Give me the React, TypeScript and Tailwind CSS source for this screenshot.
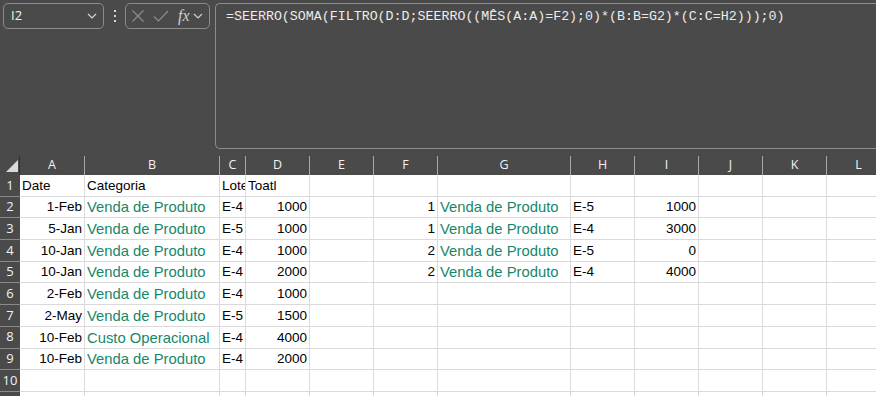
import React from "react";

type Cell = { v: string; align?: "l" | "r"; green?: boolean };

const COLS = ["A", "B", "C", "D", "E", "F", "G", "H", "I", "J", "K", "L"];
const WIDTHS = ["w-[65px]", "w-[135px]", "w-[26px]", "w-[64px]", "w-[64px]", "w-[64px]", "w-[133px]", "w-[64px]", "w-[64px]", "w-[64px]", "w-[64px]", "w-[64px]"];

const FORMULA = "=SEERRO(SOMA(FILTRO(D:D;SEERRO((MÊS(A:A)=F2);0)*(B:B=G2)*(C:C=H2)));0)";

const l = (v: string): Cell => ({ v });
const r = (v: string): Cell => ({ v, align: "r" });
const g = (v: string): Cell => ({ v, green: true });
const e: Cell = { v: "" };

const rows: Cell[][] = [
  [l("Date"), l("Categoria"), l("Lote"), l("Toatl"), e, e, e, e, e, e, e, e],
  [r("1-Feb"), g("Venda de Produto"), l("E-4"), r("1000"), e, r("1"), g("Venda de Produto"), l("E-5"), r("1000"), e, e, e],
  [r("5-Jan"), g("Venda de Produto"), l("E-5"), r("1000"), e, r("1"), g("Venda de Produto"), l("E-4"), r("3000"), e, e, e],
  [r("10-Jan"), g("Venda de Produto"), l("E-4"), r("1000"), e, r("2"), g("Venda de Produto"), l("E-5"), r("0"), e, e, e],
  [r("10-Jan"), g("Venda de Produto"), l("E-4"), r("2000"), e, r("2"), g("Venda de Produto"), l("E-4"), r("4000"), e, e, e],
  [r("2-Feb"), g("Venda de Produto"), l("E-4"), r("1000"), e, e, e, e, e, e, e, e],
  [r("2-May"), g("Venda de Produto"), l("E-5"), r("1500"), e, e, e, e, e, e, e, e],
  [r("10-Feb"), g("Custo Operacional"), l("E-4"), r("4000"), e, e, e, e, e, e, e, e],
  [r("10-Feb"), g("Venda de Produto"), l("E-4"), r("2000"), e, e, e, e, e, e, e, e],
  [e, e, e, e, e, e, e, e, e, e, e, e],
  [e, e, e, e, e, e, e, e, e, e, e, e],
];

const Chevron = ({ className }: { className?: string }) => (
  <svg width="10" height="6" viewBox="0 0 10 6" className={className}>
    <path d="M1 1 L5 5 L9 1" fill="none" stroke="currentColor" strokeWidth="1.2" />
  </svg>
);

const FormulaBar: React.FC = () => (
  <div className="flex h-[156px] pt-[3px] pl-[3px]">
    <div className="flex h-[26px] w-[101px] items-center justify-between rounded-[5px] border border-[#8c8c8c] pl-[7px] pr-[6px] text-[13px] text-[#f2f2f2] font-['Open_Sans',sans-serif]">
      <span>I2</span>
      <Chevron className="text-[#d6d6d6]" />
    </div>
    <div className="flex h-[26px] w-[21px] flex-col items-center justify-center gap-[3px]">
      <span className="h-[2px] w-[2px] bg-[#d6d6d6]" />
      <span className="h-[2px] w-[2px] bg-[#d6d6d6]" />
      <span className="h-[2px] w-[2px] bg-[#d6d6d6]" />
    </div>
    <div className="flex h-[26px] w-[85px] items-center rounded-[5px] border border-[#8c8c8c] pl-[5px] pr-[2px]">
      <svg width="14" height="14" viewBox="0 0 14 14" className="text-[#8e8e8e]">
        <path d="M1.5 1.5 L12.5 12.5 M12.5 1.5 L1.5 12.5" stroke="currentColor" strokeWidth="1.1" fill="none" />
      </svg>
      <svg width="16" height="14" viewBox="0 0 16 14" className="ml-[8px] text-[#8e8e8e]">
        <path d="M1 7.5 L5.5 12 L15 2" stroke="currentColor" strokeWidth="1.1" fill="none" />
      </svg>
      <span className="ml-[9px] text-[16px] italic leading-none text-[#cfcfcf] font-['Liberation_Serif',serif]">fx</span>
      <Chevron className="ml-[3px] text-[#cfcfcf]" />
    </div>
    <div className="ml-[5px] h-[146px] flex-1 rounded-l-[5px] border border-r-0 border-[#8c8c8c] pl-[10px] pt-[4px]">
      <div className="text-[13.3px] leading-[18px] text-[#ececec] font-['Liberation_Mono',monospace] whitespace-nowrap">
        {FORMULA}
      </div>
    </div>
  </div>
);

const App: React.FC = () => {
  return (
    <div className="h-[396px] w-[876px] overflow-hidden bg-[#4a4a4a]">
      <FormulaBar />
      <div className="flex h-[19px] text-[12.5px] text-[#f2f2f2] font-['Open_Sans',sans-serif]">
        <div className="relative w-[20px] shrink-0 border-r border-[#2f2f2f]">
          <svg width="12" height="12" viewBox="0 0 12 12" className="absolute left-[6px] top-[4px]">
            <path d="M12 0 L12 12 L0 12 Z" fill="#d9d9d9" />
          </svg>
        </div>
        {COLS.map((c, i) => (
          <div key={c} className={`${WIDTHS[i]} shrink-0 flex items-center justify-center border-r border-[#a8a8a8]`}>
            {c}
          </div>
        ))}
      </div>
      {rows.map((row, ri) => (
        <div key={ri} className="flex h-[21.7px]">
          <div className="flex w-[20px] shrink-0 items-center justify-center border-b border-[#8a8a8a] bg-[#4a4a4a] text-[13px] text-[#f2f2f2] font-['Open_Sans',sans-serif]">
            {ri < 10 ? ri + 1 : ""}
          </div>
          {row.map((cell, ci) => (
            <div
              key={ci}
              className={`${WIDTHS[ci]} shrink-0 flex items-end overflow-hidden whitespace-nowrap border-r border-b border-[#dadada] bg-white px-[2px] pb-[1px] leading-[18px] font-['Liberation_Sans',sans-serif] ${cell.align === "r" ? "justify-end" : "justify-start"} ${cell.green ? "text-[14.8px] text-[#16876a]" : "text-[13.5px] text-black"}`}
            >
              {cell.v}
            </div>
          ))}
        </div>
      ))}
    </div>
  );
};

export default App;
